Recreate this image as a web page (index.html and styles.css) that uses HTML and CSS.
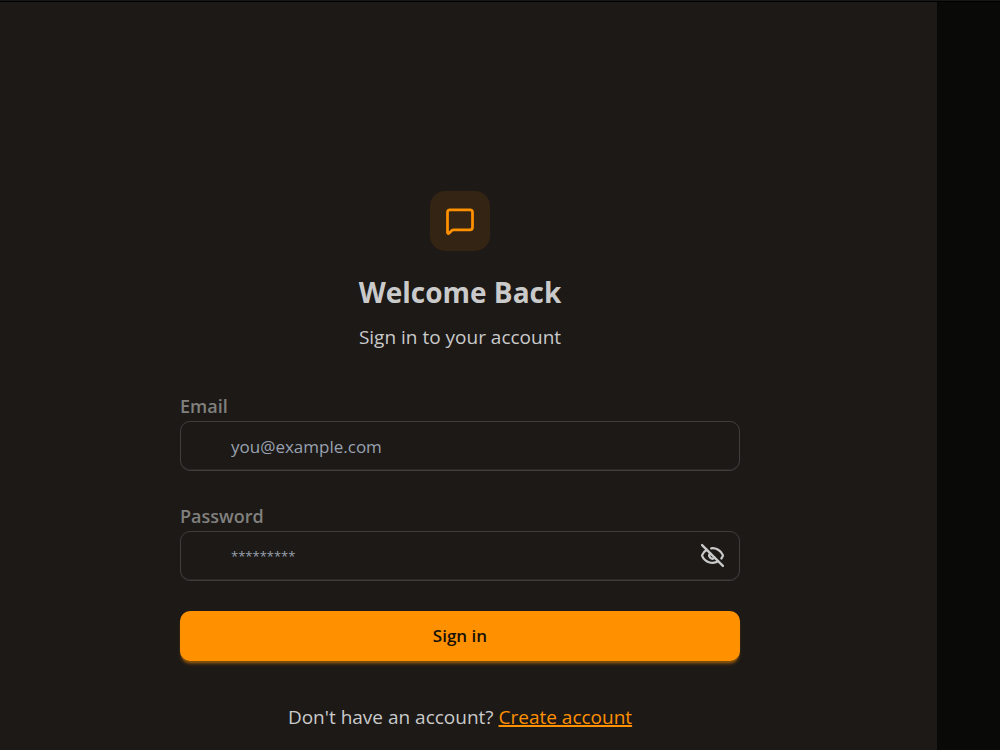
FILE: index.html
```html
<!DOCTYPE html>
<html lang="en">
<head>
<meta charset="utf-8">
<meta name="viewport" content="width=device-width, initial-scale=1">
<title>Sign in</title>
<link rel="stylesheet" href="styles.css">
</head>
<body>
<div class="layout">
  <main class="panel">
    <div class="login">
      <header class="intro">
        <div class="logo">
          <svg class="logo-icon" viewBox="0 0 24 24" aria-hidden="true"><path d="M22 17a2 2 0 0 1-2 2H6.828a2 2 0 0 0-1.414.586l-2.202 2.202A.71.71 0 0 1 2 21.286V5a2 2 0 0 1 2-2h16a2 2 0 0 1 2 2z"/></svg>
        </div>
        <h1 class="title">Welcome Back</h1>
        <p class="subtitle">Sign in to your account</p>
      </header>
      <form class="form">
        <div class="field">
          <label class="label" for="email">Email</label>
          <div class="control">
            <input class="input" id="email" type="email" placeholder="you@example.com">
          </div>
        </div>
        <div class="field">
          <label class="label" for="password">Password</label>
          <div class="control">
            <input class="input input-password" id="password" type="password" placeholder="*********">
            <button class="toggle" type="button" aria-label="Show password">
              <svg class="toggle-icon" viewBox="0 0 24 24" aria-hidden="true"><path d="M10.733 5.076a10.744 10.744 0 0 1 11.205 6.575 1 1 0 0 1 0 .696 10.747 10.747 0 0 1-1.444 2.49"/><path d="M14.084 14.158a3 3 0 0 1-4.242-4.242"/><path d="M17.479 17.499a10.75 10.75 0 0 1-15.417-5.151 1 1 0 0 1 0-.696 10.75 10.75 0 0 1 4.446-5.143"/><path d="m2 2 20 20"/></svg>
            </button>
          </div>
        </div>
        <button class="submit" type="submit">Sign in</button>
      </form>
      <p class="signup">Don't have an account? <a class="link" href="#">Create account</a></p>
    </div>
  </main>
  <aside class="side"></aside>
</div>
</body>
</html>
```
FILE: styles.css
```css
*, *::before, *::after { box-sizing: border-box; }
body {
  margin: 0;
  border-top: 1px solid #171715;
  background: #1c1917;
  color: #cacaca;
  font: 19px/30px "Open Sans", "Noto Sans", sans-serif;
}
h1, p { margin: 0; }
.layout {
  display: grid;
  grid-template-columns: 1fr 63px;
  min-height: calc(100vh - 1px);
  border-top: 1px solid #000;
}
.panel {
  display: flex;
  justify-content: center;
  padding: 189px 17px 16px 0;
}
.side { background: #090907; }
.login { width: 100%; max-width: 560px; }
.intro {
  display: flex;
  flex-direction: column;
  align-items: center;
  margin-bottom: 39px;
}
.logo {
  display: grid;
  place-items: center;
  width: 60px;
  height: 60px;
  border-radius: 15px;
  background: #332414;
}
.logo-icon, .toggle-icon {
  display: block;
  fill: none;
  stroke: currentColor;
  stroke-width: 2.2;
  stroke-linecap: round;
  stroke-linejoin: round;
}
.logo-icon { width: 30px; height: 30px; color: #ff9000; }
.title {
  margin: 21px 0 10px;
  font-size: 28px;
  line-height: 40px;
  font-weight: 700;
}
.form { display: grid; gap: 30px; }
.label {
  display: block;
  color: #80807d;
  font-size: 18px;
  font-weight: 600;
  line-height: 30px;
}
.control { position: relative; }
.input {
  display: block;
  width: 100%;
  height: 50px;
  padding: 0 50px;
  border: 1px solid #403e3c;
  border-radius: 10px;
  background: transparent;
  box-shadow: inset 0 -1px 0 #2b2826;
  color: #cacaca;
  font: inherit;
  font-size: 17px;
}
.input::placeholder { color: #99a1af; opacity: 1; }
.input-password { padding-bottom: 4px; }
.input-password::placeholder { font-size: 13px; }
.toggle {
  position: absolute;
  top: 0;
  right: 0;
  display: grid;
  place-items: center;
  width: 55px;
  height: 48px;
  padding: 0;
  border: 0;
  background: none;
  color: #cacaca;
}
.toggle-icon { width: 25px; height: 25px; }
.submit {
  height: 50px;
  border: 0;
  border-radius: 10px;
  background: #ff9000;
  box-shadow: 0 3px 2px -1px #80500f, 0 4px 4px -2px #80500f;
  color: #161108;
  font: inherit;
  font-size: 17px;
  font-weight: 600;
  line-height: 24px;
  padding-bottom: 2px;
}
.signup { margin-top: 41px; text-align: center; }
.link { color: #ff9000; text-decoration: underline; text-decoration-thickness: 2px; }
```
